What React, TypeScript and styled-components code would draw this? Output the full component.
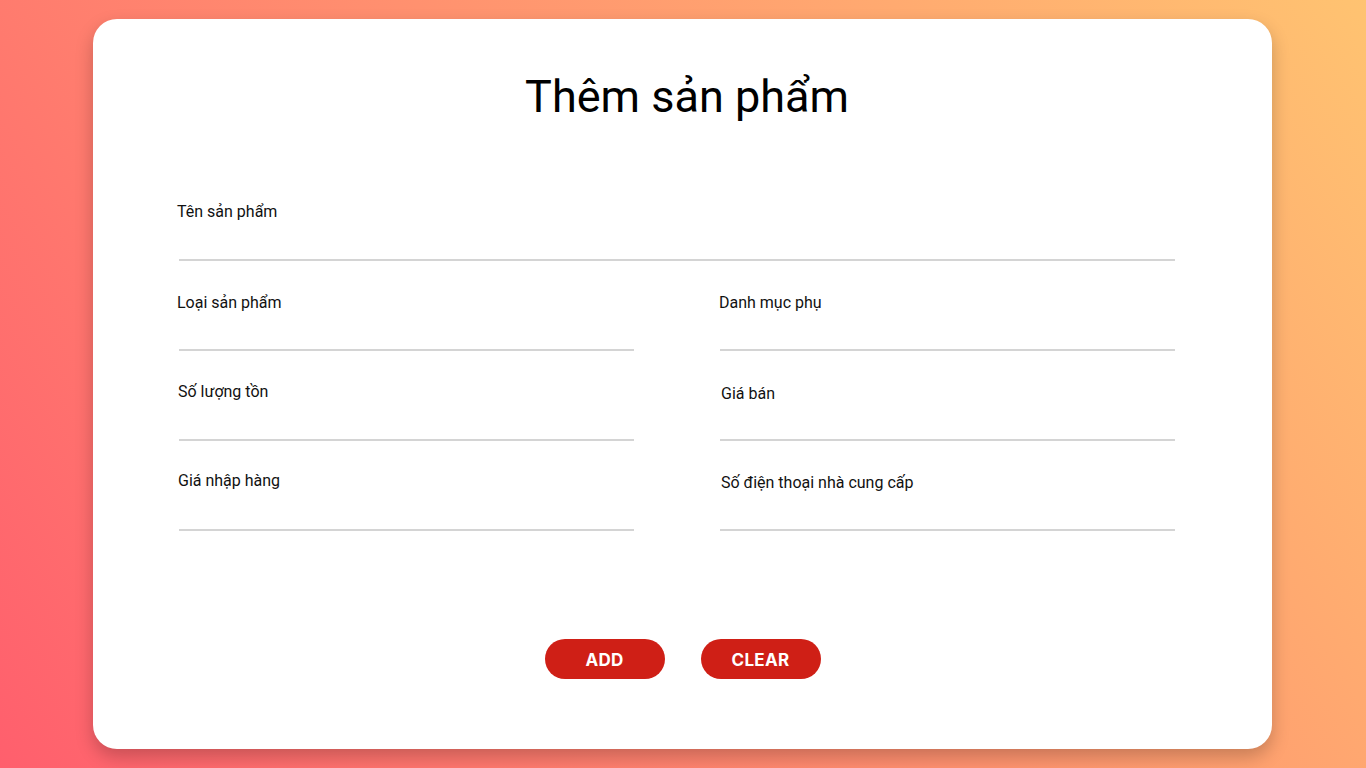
import React from "react";
import styled, { createGlobalStyle } from "styled-components";

const GlobalStyle = createGlobalStyle`
  html, body, #root { margin: 0; padding: 0; height: 100%; }
  body {
    font-family: Roboto, "Noto Sans", sans-serif;
    background: linear-gradient(55deg, #ff5f6d, #ffc371);
    overflow: hidden;
  }
  * { box-sizing: border-box; }
`;

const Page = styled.div`
  min-height: 100vh;
  padding-top: 19px;
`;

const Card = styled.div`
  width: 1179px;
  height: 730px;
  margin: 0 0 0 93px;
  background: #fff;
  border-radius: 24px;
  box-shadow: 0 8px 18px rgba(0, 0, 0, 0.22);
  padding: 51px 97px 70px 86px;
  display: flex;
  flex-direction: column;
`;

const Title = styled.h1`
  margin: 0 0 77px 20px;
  height: 54px;
  font-family: Roboto, sans-serif;
  font-weight: 400;
  font-size: 45px;
  line-height: 54px;
  text-align: center;
  color: #000;
`;

const FormGrid = styled.div`
  display: grid;
  grid-template-columns: 455px 455px;
  column-gap: 86px;
  row-gap: 30px;
`;

const Field = styled.div<{ $full?: boolean }>`
  grid-column: ${(p) => (p.$full ? "1 / -1" : "auto")};
  display: flex;
  flex-direction: column;
  height: 60px;
`;

const Label = styled.label<{ $dx?: number; $dy?: number }>`
  display: block;
  height: 20px;
  font-size: 16px;
  line-height: 20px;
  color: #111;
  margin-left: ${(p) => p.$dx ?? -2}px;
  transform: translateY(${(p) => (p.$dy ?? 0) + 1}px);
`;

const Input = styled.input`
  height: 40px;
  border: none;
  border-bottom: 2px solid #d4d4d4;
  outline: none;
  background: transparent;
  font-family: Roboto, sans-serif;
  font-size: 15px;
  padding: 0;
`;

const Actions = styled.div`
  margin-top: 108px;
  display: flex;
  justify-content: center;
  gap: 36px;
  padding-left: 11px;
`;

const Button = styled.button`
  width: 120px;
  height: 40px;
  border: none;
  border-radius: 20px;
  background: #cf1f16;
  color: #fff;
  font-family: Inter, "Open Sans", sans-serif;
  font-weight: 700;
  font-size: 17px;
  letter-spacing: 0.3px;
  padding-top: 2px;
  cursor: pointer;
`;

const fields: { label: string; full?: boolean; dx?: number; dy?: number }[] = [
  { label: "Tên sản phẩm", full: true, dx: -2 },
  { label: "Loại sản phẩm", dx: -2, dy: 1 },
  { label: "Danh mục phụ", dx: -1, dy: 1 },
  { label: "Số lượng tồn", dx: -1 },
  { label: "Giá bán", dx: 1, dy: 2 },
  { label: "Giá nhập hàng", dx: -1, dy: -1 },
  { label: "Số điện thoại nhà cung cấp", dx: 1, dy: 1 },
];

export default function App() {
  return (
    <>
      <GlobalStyle />
      <Page>
        <Card>
          <Title>Thêm sản phẩm</Title>
          <FormGrid>
            {fields.map((f) => (
              <Field key={f.label} $full={f.full}>
                <Label $dx={f.dx} $dy={f.dy}>{f.label}</Label>
                <Input type="text" />
              </Field>
            ))}
          </FormGrid>
          <Actions>
            <Button>ADD</Button>
            <Button>CLEAR</Button>
          </Actions>
        </Card>
      </Page>
    </>
  );
}
